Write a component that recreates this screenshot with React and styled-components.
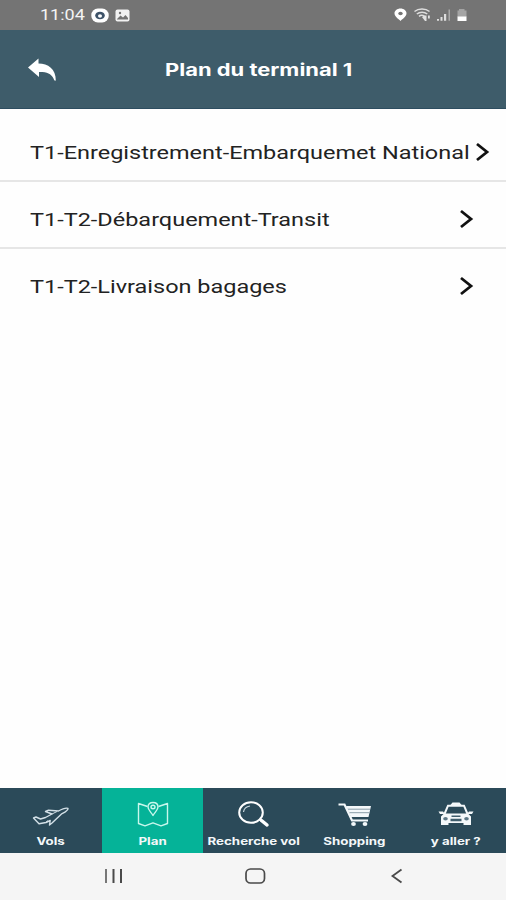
import styled, { createGlobalStyle } from 'styled-components'

const rows = [
	{ label: 'T1-Enregistrement-Embarquemet National', end: 16 },
	{ label: 'T1-T2-Débarquement-Transit', end: 32 },
	{ label: 'T1-T2-Livraison bagages', end: 32 },
]

const tabs = [
	{ label: 'Vols', Icon: PlaneIcon },
	{ label: 'Plan', Icon: MapIcon, active: true },
	{ label: 'Recherche vol', Icon: SearchIcon },
	{ label: 'Shopping', Icon: CartIcon },
	{ label: 'y aller ?', Icon: TaxiIcon },
]

export default function App() {
	return (
		<Screen>
			<GlobalStyle />
			<StatusBar>
				<StatusGroup>
					<Time>11:04</Time>
					<BadgeIcon />
					<PictureIcon />
				</StatusGroup>
				<SignalIcons />
			</StatusBar>
			<Header>
				<BackButton aria-label='Retour'>
					<ReplyIcon />
				</BackButton>
				<Title>Plan du terminal 1</Title>
			</Header>
			<List>
				{rows.map((row) => (
					<Row key={row.label} $end={row.end}>
						<RowLabel>{row.label}</RowLabel>
						<ChevronIcon />
					</Row>
				))}
			</List>
			<TabBar>
				{tabs.map(({ label, Icon, active }) => (
					<Tab key={label} $active={active}>
						<Icon />
						<TabLabel>{label}</TabLabel>
					</Tab>
				))}
			</TabBar>
			<SystemNav>
				<SystemIcons />
			</SystemNav>
		</Screen>
	)
}

function BadgeIcon() {
	return (
		<svg width='18' height='15' viewBox='0 0 18 15'>
			<rect x='0.300' y='0.500' width='17.400' height='14' rx='6.500' fill='#fff' />
			<ellipse cx='9' cy='7.500' rx='4.800' ry='3.800' fill='#3d5268' />
			<ellipse cx='9' cy='8' rx='2' ry='1.700' fill='#fff' />
		</svg>
	)
}

function PictureIcon() {
	return (
		<svg width='15' height='13' viewBox='0 0 15 13'>
			<rect x='0.500' y='0.500' width='14' height='12' rx='2' fill='#f2f2f2' />
			<path d='M2 10l3.500-3.500 2.500 2 2.500-2.500L13 9v1.500H2z' fill='#747474' />
			<circle cx='5' cy='4' r='1.200' fill='#747474' />
		</svg>
	)
}

function SignalIcons() {
	return (
		<svg width='76' height='16' viewBox='0 0 76 16'>
			<path
				d='M6.500 1.500C3 1.500.5 3.700.5 6.300c0 3.200 3.800 5.500 6 7.700 2.200-2.200 6-4.500 6-7.700 0-2.600-2.500-4.800-6-4.800z'
				fill='#fff'
			/>
			<ellipse cx='6.500' cy='6.500' rx='2.200' ry='1.800' fill='#747474' />
			<g fill='none' stroke='#dedede' strokeWidth='1.500'>
				<path d='M20.500 4.500c4-3.300 11-3.300 15 0' />
				<path d='M22.800 7c3-2.300 7.500-2.300 10.500 0' />
				<path d='M25 9.300c1.500-1.200 4-1.200 5.500 0' />
			</g>
			<path d='M28 10l2.500-1.500h2V14H31zM34 8.500h1.800v3H34z' fill='#e2e2e2' />
			<path d='M43 12h2v1.700h-2zM46.500 10h2v3.700h-2zM50 7h2.200v6.700H50z' fill='#dedede' />
			<path d='M54.500 2.500H56v11.200h-1.500z' fill='#a9a9a9' />
			<path d='M65 2h5.500v1.500h2V10h-9V3.500H65z' fill='#a4a4a4' />
			<path d='M63.500 9.500h9V14h-9z' fill='#fff' />
		</svg>
	)
}

function ReplyIcon() {
	return (
		<svg width='28' height='24' viewBox='0 0 28 24'>
			<path
				d='M0 9.500L10.500 0.500v5C20 5.500 28 11 27.800 22.500C26.500 23 26 22 25.500 20.500C23 15.500 18.500 13.800 11 14v5z'
				fill='#fff'
			/>
		</svg>
	)
}

function ChevronIcon() {
	return (
		<svg width='15' height='20' viewBox='0 0 15 20'>
			<path d='M2 2L12 10L2 18' fill='none' stroke='#111' strokeWidth='2.800' />
		</svg>
	)
}

function PlaneIcon() {
	return (
		<svg width='38' height='28' viewBox='0 0 38 28'>
			<path
				d='M1.500 18l2.500-1 4.500 2 5-1.500L20 14l-6.500-2.500 3-1.300 10 .8c3.500-2 7-3.500 9.500-2.700.5 2-3 3.700-6.500 5.700L20 23l-2.500 2 .7-4.500L14 22.500l-7 1.200z'
				fill='none'
				stroke='#d3e0e7'
				strokeWidth='1.400'
				strokeLinejoin='round'
			/>
			<path d='M20 14l5-2.500M14 22.500l1.500-2' stroke='#d3e0e7' strokeWidth='1' />
		</svg>
	)
}

function MapIcon() {
	return (
		<svg width='34' height='28' viewBox='0 0 34 28'>
			<g fill='none' stroke='#c8f7ec' strokeWidth='1.400' strokeLinejoin='round'>
				<path d='M11.500 6.500L7 5 2.500 3.500V23.500l6.500 2.300 8-3 8 3 6.500-2.300V3.500L27 5l-4.500 1.500' />
				<path d='M17 15.500c-2-3.500-5-5.500-5-8.500C12 4 14 2.500 17 2.500s5 1.500 5 4.500c0 3-3 5-5 8.500z' />
				<ellipse cx='17' cy='7' rx='2' ry='1.800' />
			</g>
		</svg>
	)
}

function SearchIcon() {
	return (
		<svg width='34' height='28' viewBox='0 0 34 28'>
			<ellipse cx='14' cy='12.500' rx='11.800' ry='10.300' fill='none' stroke='#fff' strokeWidth='2' />
			<path d='M6.500 12c.5-3.500 3-5.500 6.500-6' fill='none' stroke='#cbd9e0' strokeWidth='1.200' />
			<path d='M22.500 19.500l2.500 1.700' stroke='#fff' strokeWidth='2' />
			<path d='M24.500 20.500l5.500 4.500' stroke='#fff' strokeWidth='3.500' strokeLinecap='round' />
		</svg>
	)
}

function CartIcon() {
	return (
		<svg width='36' height='28' viewBox='0 0 36 28'>
			<path d='M1.500 4.500h6l7.500 16h16' fill='none' stroke='#f4f8fa' strokeWidth='2.200' />
			<path d='M9 6h25l-2.500 11H14z' fill='#f4f8fa' />
			<path d='M11 9.200h22M12.500 12.700h20' stroke='#8a9da8' strokeWidth='1' />
			<ellipse cx='16.500' cy='24' rx='2.400' ry='2' fill='#f4f8fa' />
			<ellipse cx='28' cy='24' rx='2.400' ry='2' fill='#f4f8fa' />
		</svg>
	)
}

function TaxiIcon() {
	return (
		<svg width='36' height='28' viewBox='0 0 36 28'>
			<path d='M12 5.500l2.500-3h7l2.500 3z' fill='#f4f8fa' />
			<path d='M6.500 14l3.500-8.300h16L29.500 14' fill='none' stroke='#f4f8fa' strokeWidth='2' />
			<path d='M0.500 11.500h4.500l2 2.500H2zM35.500 11.500H31l-2 2.500h5z' fill='#f4f8fa' />
			<path d='M6 13.500h24l3 3v8.500h-7.500v-2h-15v2H3v-8.500z' fill='#f4f8fa' />
			<path d='M13.500 15.500h9V17h-9zM12.500 18.800h11v2.500h-11z' fill='#3f5d6c' />
			<ellipse cx='7.500' cy='18.800' rx='2.300' ry='1.800' fill='#5d7886' />
			<ellipse cx='28.500' cy='18.800' rx='2.300' ry='1.800' fill='#5d7886' />
		</svg>
	)
}

function SystemIcons() {
	return (
		<svg width='506' height='46' viewBox='0 0 506 46'>
			<path d='M106 16v14' stroke='#777' strokeWidth='2' />
			<path d='M113.500 16v14M121 16v14' stroke='#4a4a4a' strokeWidth='2' />
			<rect x='246' y='16' width='18.500' height='14' rx='4.500' fill='none' stroke='#4a4a4a' strokeWidth='1.700' />
			<path d='M401.500 16.500L392.500 23l9 6.500' fill='none' stroke='#4a4a4a' strokeWidth='1.800' />
		</svg>
	)
}

const GlobalStyle = createGlobalStyle`
	body {
		margin: 0;
	}
`

const Screen = styled.div`
	display: flex;
	flex-direction: column;
	width: 506px;
	height: 900px;
	overflow: hidden;
	background-color: #fefefe;
	font-family: Roboto, 'Liberation Sans', sans-serif;
`

const StatusBar = styled.div`
	display: flex;
	align-items: center;
	justify-content: space-between;
	height: 30px;
	padding: 0 36px 0 40px;
	background-color: #747474;
`

const StatusGroup = styled.div`
	display: flex;
	align-items: center;
	gap: 6px;
`

const Time = styled.span`
	width: 45px;
	font-size: 15px;
	color: #f4f4f4;
	transform: scaleX(1.2);
	transform-origin: left;
`

const Header = styled.header`
	display: flex;
	align-items: center;
	height: 79px;
	box-sizing: border-box;
	border-bottom: 1px solid #2d4d60;
	background-color: #3e5c6a;
`

const BackButton = styled.button`
	display: flex;
	width: 165px;
	padding: 2px 0 0 28px;
	border: none;
	background: none;
`

const Title = styled.h1`
	margin: 2px 0 0;
	font-family: Inter, sans-serif;
	font-size: 17px;
	font-weight: 700;
	color: #fff;
	white-space: nowrap;
	transform: scaleX(1.29);
	transform-origin: left;
`

const List = styled.ul`
	flex: 1;
	margin: 0;
	padding: 6px 0 0;
	list-style-type: none;
`

const Row = styled.li`
	display: flex;
	align-items: center;
	justify-content: space-between;
	height: 67px;
	box-sizing: border-box;
	padding: 8px ${(props) => props.$end}px 0 30px;
	border-bottom: 2px solid #e6e6e6;

	&:last-child {
		border-bottom-color: transparent;
	}
`

const RowLabel = styled.span`
	margin-top: 2px;
	font-size: 19px;
	color: #222;
	white-space: nowrap;
	transform: scaleX(1.235);
	transform-origin: left;
`

const TabBar = styled.nav`
	display: grid;
	grid-template-columns: 102px repeat(4, 101px);
	height: 65px;
`

const Tab = styled.div`
	display: flex;
	flex-direction: column;
	align-items: center;
	padding-top: 12px;
	background-color: ${(props) => (props.$active ? '#05b398' : '#2b4a59')};
`

const TabLabel = styled.span`
	margin-top: 6px;
	font-family: Inter, sans-serif;
	font-size: 10px;
	font-weight: 700;
	line-height: 14px;
	color: #f4f8fa;
	white-space: nowrap;
	transform: scaleX(1.33);
`

const SystemNav = styled.div`
	height: 47px;
	background-color: #f5f5f5;
`
